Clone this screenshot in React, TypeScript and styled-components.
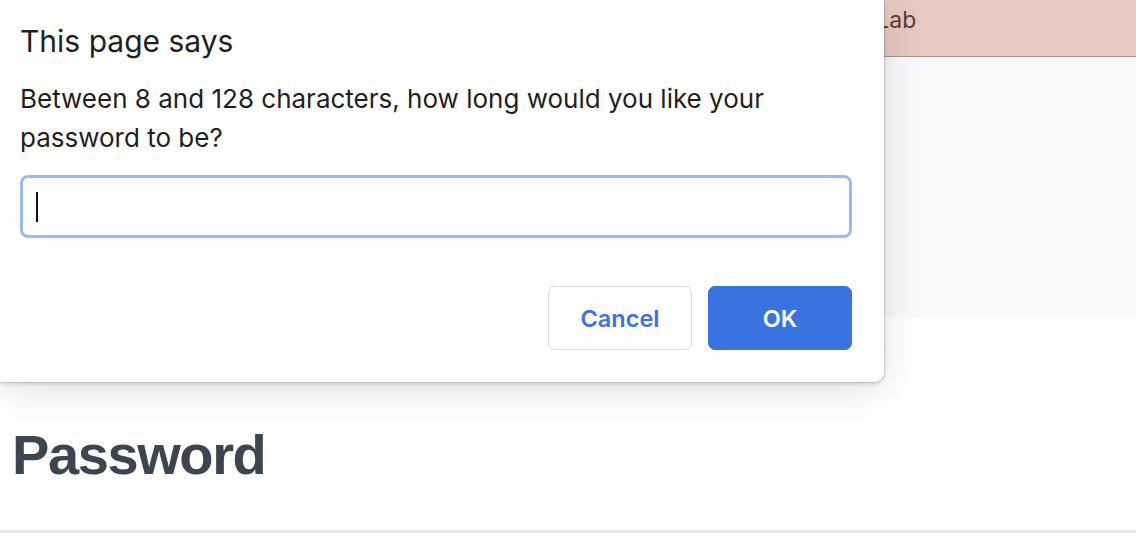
import React from "react";
import styled, { createGlobalStyle } from "styled-components";

const Global = createGlobalStyle`
  html, body { margin: 0; padding: 0; background: #ffffff; }
  body { font-family: Inter, "Noto Sans", sans-serif; }
`;

const Stage = styled.div`
  position: relative;
  width: 1136px;
  height: 546px;
  overflow: hidden;
  background: #ffffff;
  display: flex;
  flex-direction: column;
`;

const TopBand = styled.header`
  height: 57px;
  flex: none;
  box-sizing: border-box;
  background: #e8c9c1;
  border-bottom: 1px solid #a8918c;
  display: flex;
  align-items: flex-start;
  padding-top: 6px;
`;

const BrandText = styled.span`
  font-family: Inter, "Noto Sans", sans-serif;
  font-size: 23px;
  color: #5a3a32;
  margin-left: 846px;
`;

const GraySection = styled.section`
  height: 260px;
  flex: none;
  background: #f8f9fb;
`;

const Main = styled.main`
  flex: 1;
  display: flex;
  flex-direction: column;
  padding: 110px 0 0 12px;
  border-bottom: 3px solid #e6e7ea;
  margin-bottom: 13px;
`;

const Heading = styled.h1`
  margin: 0;
  font-family: "Liberation Sans", Arial, sans-serif;
  font-weight: 700;
  font-size: 56px;
  line-height: 1;
  color: #3c4653;
  letter-spacing: -1.4px;
`;

const Dialog = styled.div`
  position: absolute;
  top: 0;
  left: 0;
  width: 884px;
  height: 382px;
  box-sizing: border-box;
  background: #ffffff;
  border-radius: 0 0 9px 0;
  box-shadow: 0 0 0 1px rgba(0, 0, 0, 0.1), 0 2px 4px rgba(0, 0, 0, 0.14),
    0 8px 40px rgba(0, 0, 0, 0.12);
  padding: 23px 32px 32px 20px;
  display: flex;
  flex-direction: column;
`;

const Title = styled.div`
  font-size: 30px;
  line-height: 36px;
  color: #1f1f1f;
`;

const Message = styled.div`
  margin-top: 20px;
  font-size: 26px;
  line-height: 39px;
  color: #1f1f1f;
`;

const Field = styled.div`
  margin-top: 18px;
  height: 63px;
  box-sizing: border-box;
  border: 3px solid #9fbaf0;
  border-radius: 8px;
  display: flex;
  align-items: center;
  padding-left: 13px;
`;

const Caret = styled.span`
  width: 2px;
  height: 30px;
  background: #111111;
`;

const Actions = styled.div`
  margin-top: 48px;
  display: flex;
  justify-content: flex-end;
  gap: 16px;
`;

const Button = styled.button<{ $primary?: boolean }>`
  width: 144px;
  height: 64px;
  border-radius: 7px;
  font-family: Inter, "Noto Sans", sans-serif;
  font-weight: 600;
  font-size: 23.5px;
  cursor: pointer;
  border: 1px solid ${(p) => (p.$primary ? "#3873e0" : "#dadce0")};
  background: ${(p) => (p.$primary ? "#3873e0" : "#ffffff")};
  color: ${(p) => (p.$primary ? "#ffffff" : "#3873e0")};
`;

export default function App() {
  return (
    <>
      <Global />
      <Stage>
        <TopBand>
          <BrandText>GitLab</BrandText>
        </TopBand>
        <GraySection />
        <Main>
          <Heading>Password</Heading>
        </Main>
        <Dialog role="dialog">
          <Title>This page says</Title>
          <Message>
            Between 8 and 128 characters, how long would you like your password to be?
          </Message>
          <Field>
            <Caret />
          </Field>
          <Actions>
            <Button>Cancel</Button>
            <Button $primary>OK</Button>
          </Actions>
        </Dialog>
      </Stage>
    </>
  );
}
